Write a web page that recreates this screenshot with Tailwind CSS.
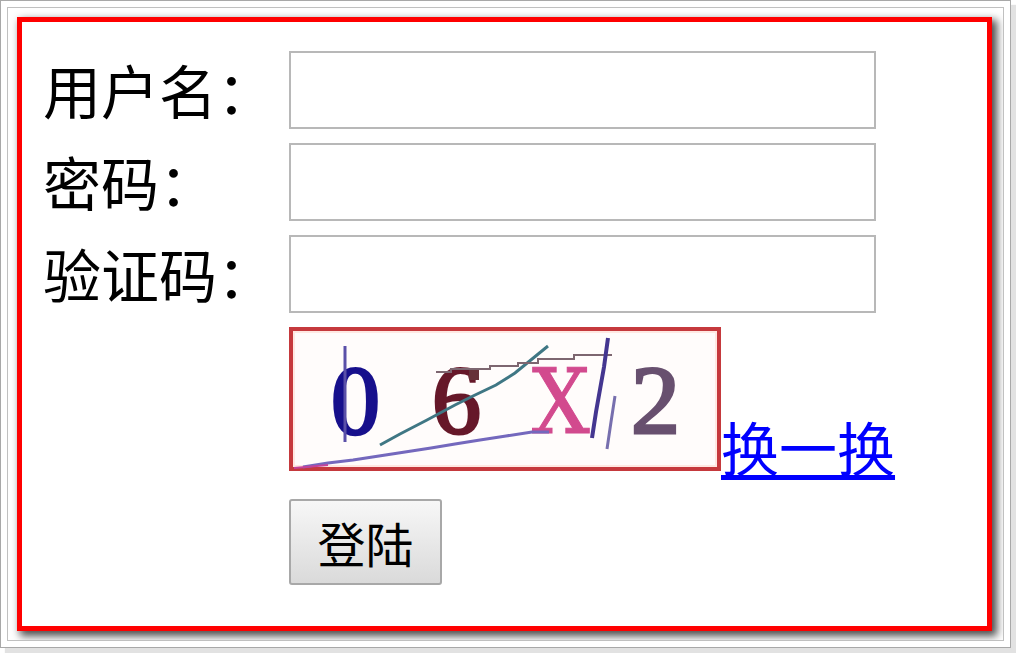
<!DOCTYPE html>
<html lang="zh-CN">
<head>
<meta charset="utf-8">
<title>登陆</title>
<script src="https://cdn.jsdelivr.net/npm/@tailwindcss/browser@4"></script>
</head>
<body class="bg-white pr-[5px] pb-[5px] font-['Noto_Sans_CJK_SC',sans-serif] text-black">
<main class="border border-[#a8a8a8] p-[6px] shadow-[5px_5px_1px_#e2e2e2]">
  <div class="overflow-hidden border border-[#c0c0c0] pt-[9px] pr-[11px] pb-[9px] pl-[9px]">
    <form class="grid grid-cols-[246px_1fr] items-start gap-y-[14px] border-[5px] border-[#ff0000] pt-[29px] pr-6 pb-[41px] pl-[21px] text-[58px] leading-[76px] shadow-[4px_4px_8px_1px_rgba(0,0,0,0.7)]">
      <label for="user">用户名：</label>
      <input id="user" type="text" class="h-[78px] w-[587px] max-w-full border-2 border-[#b8b8b8] bg-white px-2 outline-none">
      <label for="pass">密码：</label>
      <input id="pass" type="password" class="h-[78px] w-[587px] max-w-full border-2 border-[#b8b8b8] bg-white px-2 outline-none">
      <label for="code">验证码：</label>
      <input id="code" type="text" class="h-[78px] w-[587px] max-w-full border-2 border-[#b8b8b8] bg-white px-2 outline-none">

      <div class="col-start-2 flex h-[158px] items-start">
        <svg class="h-[144px] w-[432px] shrink-0" viewBox="0 0 432 144" role="img" aria-label="验证码图片">
          <rect x="2" y="2" width="428" height="140" fill="#fffcfb" stroke="#c5393d" stroke-width="4"/>
          <rect x="5" y="5" width="422" height="134" fill="none" stroke="#ffe8e2" stroke-width="2"/>
          <g font-family="Liberation Serif, serif" font-size="98" stroke-width="3">
            <text x="42" y="106" fill="#17108c" stroke="#17108c">0</text>
            <text x="143" y="106" fill="#661829" stroke="#661829">6</text>
            <text x="342" y="106" fill="#68506f" stroke="#68506f">2</text>
            <text x="243" y="106" fill="#d24a8e" stroke="#d24a8e" stroke-width="1" font-family="DejaVu Serif Condensed, DejaVu Serif, serif" font-size="90">X</text>
          </g>
          <rect x="180" y="42" width="10" height="11" fill="#663238"/>
          <g fill="none" stroke-width="3">
            <path stroke="#5a50a8" d="M56 19V115"/>
            <path stroke="#3f7784" d="M91 118L111 107L138 93L166 78L184 69L207 58L226 46L259 19"/>
            <path stroke="#7d6670" stroke-width="2" d="M147 45H162V42H201V39H229V36H249V32H285V28H323"/>
            <path stroke="#7468bd" d="M14 140L39 136L64 133L90 129L116 125L142 121L166 117L191 113L217 109L243 105L260 105"/>
            <path stroke="#443690" stroke-width="4" d="M319 11L315 40L307 85L303 111"/>
            <path stroke="#776fae" d="M326 69L322 95L318 122"/>
          </g>
          <path stroke="#c3439b" stroke-width="2" d="M5 141L39 138"/>
        </svg>
        <a href="#" class="mt-[81px] text-[#0000ff] underline decoration-[5px] underline-offset-[4px]">换一换</a>
      </div>

      <button type="submit" class="col-start-2 h-[86px] w-[153px] rounded-[3px] border-2 border-[#a8a8a8] bg-linear-to-b from-[#f7f7f7] to-[#dadada] text-[48px] leading-[80px]">登陆</button>
    </form>
  </div>
</main>
</body>
</html>
